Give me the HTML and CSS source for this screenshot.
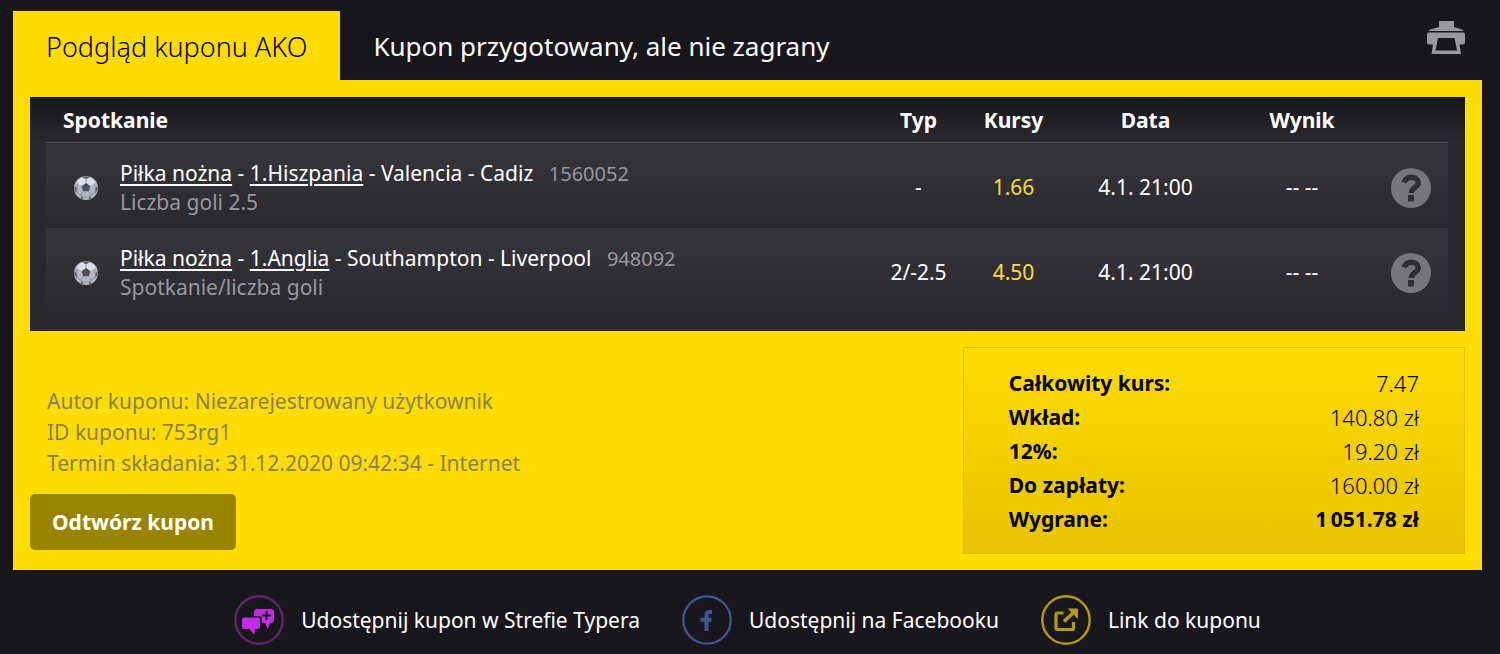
FILE: index.html
```
<!DOCTYPE html>
<html lang="pl">
<head>
<meta charset="UTF-8">
<meta name="viewport" content="width=device-width, initial-scale=1.0">
<title>Podgląd kuponu AKO</title>
<link rel="stylesheet" href="styles.css">
</head>
<body>
<svg class="sprite" aria-hidden="true">
  <symbol id="ball" viewBox="0 0 24 24">
    <circle cx="12" cy="12" r="12" fill="#b4b7c3"/>
    <path d="M3 5 L8 1 L12 3.5 L16 1 L21 5 L20 10 L16 11 L12 7 L8 11 L4 10 Z" fill="#dcdee7"/>
    <path d="M12 7 L16.5 10.2 L14.8 15.3 H9.2 L7.5 10.2 Z" fill="#4a5060"/>
    <path d="M8 1 Q12 -.6 16 1 L12 3.3 Z M.3 10 L3 12.5 L2.6 17.5 Q-.2 14 .3 10 Z M23.7 10 L21 12.5 L21.4 17.5 Q24.2 14 23.7 10 Z M6.2 22.3 L8 20 L9.5 23.6 Z M17.8 22.3 L16 20 L14.5 23.6 Z" fill="#5c6170"/>
    <path d="M12 3 V7 M16.5 10.2 L21 8.5 M14.8 15.3 L17 19 M9.2 15.3 L7 19 M7.5 10.2 L3 8.5 M7 19 L9 21 H15 L17 19 M3 8.5 V13 L3 17 L7 19 M21 8.5 V13 L21 17 L17 19" fill="none" stroke="#8a8e9b" stroke-width=".8"/>
  </symbol>
  <symbol id="question" viewBox="0 0 40 40">
    <circle cx="20" cy="20" r="20" fill="#77777b"/>
    <path d="M12.8 14.5 C14.3 11.2 16.8 9.3 20.2 9.3 C24.5 9.3 27.3 11.7 27.3 15 C27.3 19.3 20.3 19.6 20.3 25" fill="none" stroke="#2f2e33" stroke-width="5.4"/>
    <rect x="17" y="27" width="6" height="6.6" rx=".8" fill="#2f2e33"/>
  </symbol>
</svg>

<div class="coupon">
  <div class="top">
    <h1 class="tab">Podgląd kuponu AKO</h1>
    <h2 class="status">Kupon przygotowany, ale nie zagrany</h2>
    <button type="button" class="print" aria-label="Drukuj">
      <svg width="38" height="33" viewBox="0 0 38 33" fill="#98989d">
        <path d="M12 0 H27 V6 L35 8.5 L36.5 10 H1.5 L3 8.5 L12 6 Z"/>
        <path d="M2 11.5 H36 Q38 11.5 38 13.5 V21 Q38 23.5 35.5 23.5 H32.5 L34 33 H4.5 L6 23.5 H2.5 Q0 23.5 0 21 V13.5 Q0 11.5 2 11.5 Z M11 17 L8.5 29.5 H30 L27.5 17 Z" fill-rule="evenodd"/>
      </svg>
    </button>
  </div>

  <div class="panel">
    <div class="bets">
      <table class="bets-table">
        <colgroup>
          <col class="sport-col">
          <col>
          <col class="typ">
          <col class="odds">
          <col class="date">
          <col class="result">
          <col class="help">
        </colgroup>
        <thead>
          <tr>
            <th class="match" colspan="2">Spotkanie</th>
            <th>Typ</th>
            <th>Kursy</th>
            <th>Data</th>
            <th>Wynik</th>
            <th></th>
          </tr>
        </thead>
        <tbody>
          <tr>
            <td class="sport"><svg width="24" height="24"><use href="#ball"/></svg></td>
            <td class="event">
              <a href="#">Piłka nożna</a> - <a href="#">1.Hiszpania</a> - Valencia - Cadiz <span class="number">1560052</span>
              <div class="bet-type">Liczba goli 2.5</div>
            </td>
            <td>-</td>
            <td class="rate">1.66</td>
            <td>4.1. 21:00</td>
            <td>-- --</td>
            <td><svg class="question" width="40" height="40"><use href="#question"/></svg></td>
          </tr>
          <tr>
            <td class="sport"><svg width="24" height="24"><use href="#ball"/></svg></td>
            <td class="event">
              <a href="#">Piłka nożna</a> - <a href="#">1.Anglia</a> - Southampton - Liverpool <span class="number">948092</span>
              <div class="bet-type">Spotkanie/liczba goli</div>
            </td>
            <td>2/-2.5</td>
            <td class="rate">4.50</td>
            <td>4.1. 21:00</td>
            <td>-- --</td>
            <td><svg class="question" width="40" height="40"><use href="#question"/></svg></td>
          </tr>
        </tbody>
      </table>
    </div>

    <div class="summary">
      <div class="info">
        <p>Autor kuponu: Niezarejestrowany użytkownik</p>
        <p>ID kuponu: 753rg1</p>
        <p>Termin składania: 31.12.2020 09:42:34 - Internet</p>
        <button type="button" class="replay-btn">Odtwórz kupon</button>
      </div>
      <div class="totals">
        <table class="totals-table">
          <tr><th>Całkowity kurs:</th><td>7.47</td></tr>
          <tr><th>Wkład:</th><td>140.80 zł</td></tr>
          <tr><th>12%:</th><td>19.20 zł</td></tr>
          <tr><th>Do zapłaty:</th><td>160.00 zł</td></tr>
          <tr class="win"><th>Wygrane:</th><td>1&#8198;051.78 zł</td></tr>
        </table>
      </div>
    </div>
  </div>

  <div class="share">
    <a href="#">
      <svg width="50" height="50" viewBox="0 0 50 50">
        <circle cx="25" cy="25" r="23.7" fill="none" stroke="#61246f" stroke-width="2.4"/>
        <path d="M23 14 H37 Q40 14 40 17 V25 Q40 28 37 28 H36.5 L33.5 34 L31.5 28 H28 V24 Q28 21 25 21 H20 V17 Q20 14 23 14 Z" fill="#c42be8"/>
        <path d="M10 22.5 H24 Q26 22.5 26 24.5 V32 Q26 34 24 34 H21 L20 40 L15.5 34 H10 Q8 34 8 32 V24.5 Q8 22.5 10 22.5 Z" fill="#c42be8"/>
        <path d="M32.5 16 V25 M28 20.5 H37" stroke="#18171c" stroke-width="2"/>
      </svg>
      Udostępnij kupon w Strefie Typera
    </a>
    <a href="#">
      <svg width="50" height="50" viewBox="0 0 50 50">
        <circle cx="25" cy="25" r="23.7" fill="none" stroke="#3b5998" stroke-width="2.2"/>
        <path d="M30 17 H27.5 Q24.5 17 24.5 20 V36 M18.5 24.8 H29.5" fill="none" stroke="#3b5998" stroke-width="4"/>
      </svg>
      Udostępnij na Facebooku
    </a>
    <a href="#">
      <svg width="50" height="50" viewBox="0 0 50 50" fill="none" stroke="#b59b10">
        <circle cx="25" cy="25" r="23.7" stroke-width="2.4"/>
        <path d="M22.5 18 H16.5 Q15 18 15 19.5 V33 Q15 34.5 16.5 34.5 H31 Q32.5 34.5 32.5 33 V27" stroke-width="3.2"/>
        <path d="M23 26.5 L34 16" stroke-width="3.6"/>
        <path d="M26.5 13.5 H37 V24 Z" fill="#b59b10" stroke="none"/>
      </svg>
      Link do kuponu
    </a>
  </div>
</div>
</body>
</html>
```
FILE: styles.css
```
body {
  margin: 0;
  padding: 11px 18px 10px 13px;
  background-color: #18171c;
  color: #fff;
  font-family: "Noto Sans", "Open Sans", sans-serif;
  font-size: 21px;
  line-height: 29px;
}

a {
  color: inherit;
}

.sprite {
  display: none;
}

.top {
  display: flex;
  align-items: center;
}

.tab,
.status {
  margin: 0;
  padding: 19px 33px 17px;
  font-size: 26px;
  font-weight: 400;
  line-height: 33px;
}

.tab {
  background-color: #ffdc00;
  color: #000;
  font-size: 27px;
  font-weight: 300;
}

.print {
  margin: 0 17px 16px auto;
  padding: 0;
  border: none;
  background: none;
  cursor: pointer;
}

.print svg {
  display: block;
}

.panel {
  padding: 17px 17px 16px;
  background-color: #ffdc00;
}

.bets {
  padding: 0 17px 18px 16px;
  background: linear-gradient(#18171c, #29282d 45px);
}

.bets-table {
  width: 100%;
  border-collapse: collapse;
  table-layout: fixed;
  text-align: center;
}

.bets-table th {
  height: 43px;
  padding: 2px 0 0;
}

.bets-table th.match {
  padding-left: 17px;
  text-align: left;
}

.sport-col {
  width: 74px;
}

.typ,
.odds {
  width: 95px;
}

.date {
  width: 169px;
}

.result {
  width: 144px;
}

.help {
  width: 74px;
}

.bets-table tbody tr {
  background: linear-gradient(#37363b, #29282d);
}

.bets-table tbody tr:first-child {
  border-top: 1px solid #4f4e53;
}

.bets-table td {
  height: 81px;
  padding: 4px 0 0;
}

.bets-table td svg {
  display: block;
  margin: 0 auto;
}

.bets-table td.sport {
  padding-left: 6px;
}

.bets-table .event {
  text-align: left;
}

.event a {
  text-underline-offset: 3px;
}

.number {
  margin-left: 10px;
  font-size: 20px;
}

.number,
.bet-type {
  color: #98989c;
}

.rate {
  color: #ffdc2a;
}

.summary {
  display: flex;
  justify-content: space-between;
  align-items: flex-end;
  margin-top: 16px;
}

.info {
  padding-bottom: 4px;
  color: #8a8052;
}

.info p {
  margin: 0 17px;
  line-height: 31px;
}

.replay-btn {
  display: block;
  margin-top: 15px;
  padding: 14px 22px;
  border: none;
  border-radius: 5px;
  background-color: #998400;
  color: #fff;
  font-family: inherit;
  font-size: 21px;
  font-weight: 700;
  line-height: 28px;
  cursor: pointer;
}

.totals {
  box-sizing: border-box;
  width: 35%;
  padding: 18px 45px 17px;
  border: 1px solid #dfbd00;
  background: linear-gradient(#ffdc00, #e6c300);
  color: #000;
}

.totals-table {
  width: 100%;
  border-collapse: collapse;
}

.totals-table th,
.totals-table td {
  padding: 0;
  line-height: 34px;
}

.totals-table th {
  font-weight: 700;
  text-align: left;
}

.totals-table td {
  font-size: 22px;
  font-weight: 300;
  text-align: right;
}

.totals-table .win td {
  font-size: 21px;
  font-weight: 700;
}

.share {
  display: flex;
  justify-content: center;
  gap: 42px;
  margin-top: 25px;
}

.share a {
  display: flex;
  align-items: center;
  gap: 17px;
  text-decoration: none;
}
```
